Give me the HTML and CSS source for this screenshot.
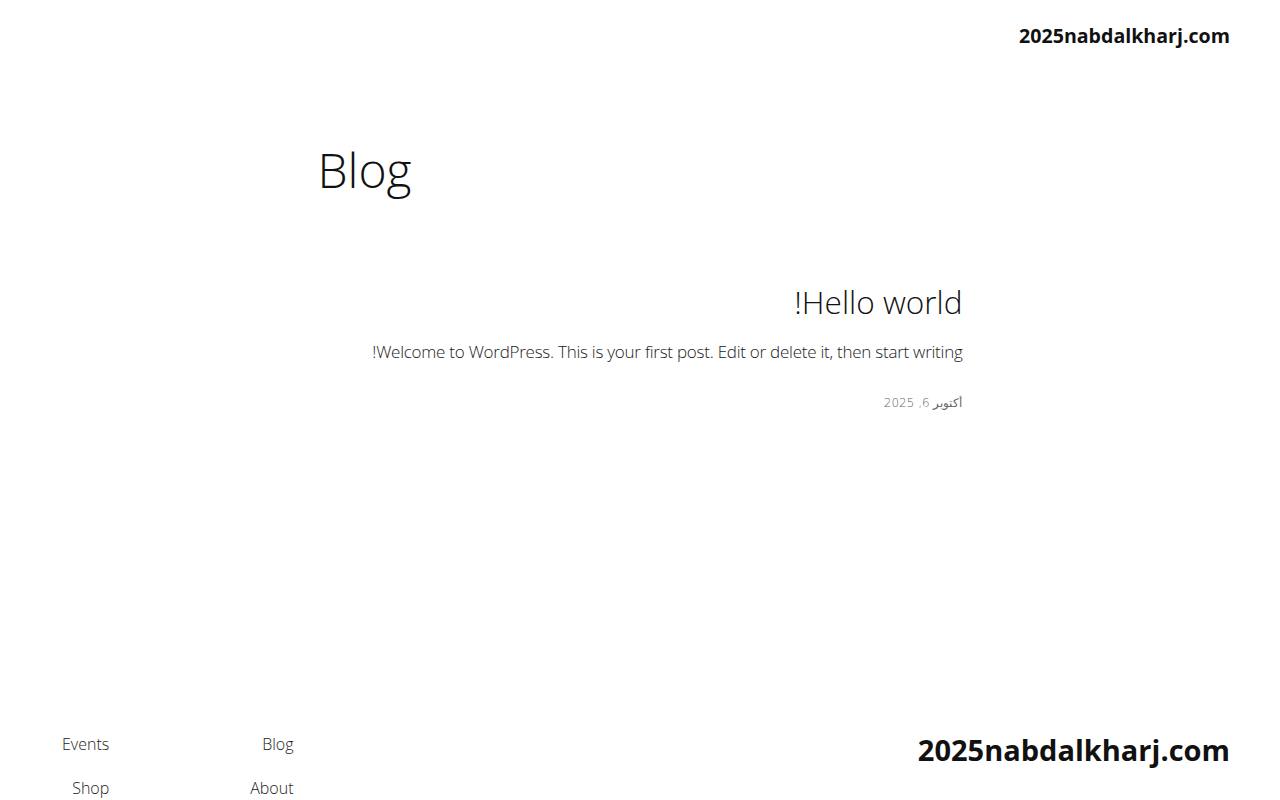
FILE: index.html
```html
<!DOCTYPE html>
<html lang="ar" dir="rtl">
<head>
<meta charset="utf-8">
<title>Blog</title>
<link rel="stylesheet" href="styles.css">
</head>
<body>
<header class="site-header">
  <p class="site-title">2025nabdalkharj.com</p>
</header>
<main class="site-main">
  <h1 class="page-title">Blog</h1>
  <article class="post">
    <h2 class="post-title">Hello world!</h2>
    <p class="post-excerpt">Welcome to WordPress. This is your first post. Edit or delete it, then start writing!</p>
    <p class="post-date">أكتوبر 6, 2025</p>
  </article>
</main>
<footer class="site-footer">
  <p class="footer-title">2025nabdalkharj.com</p>
  <nav class="footer-nav">
    <ul class="nav-col">
      <li>Blog</li>
      <li>About</li>
    </ul>
    <ul class="nav-col">
      <li>Events</li>
      <li>Shop</li>
    </ul>
  </nav>
</footer>
</body>
</html>
```

FILE: styles.css
```css
html, body {
  margin: 0;
  padding: 0;
  background: #fff;
}
body {
  font-family: "Open Sans", "Noto Sans", sans-serif;
  font-weight: 300;
  color: #111;
  direction: rtl;
}
p, h1, h2, ul { margin: 0; padding: 0; }

.site-header {
  display: flex;
  padding: 22px 50px 0 50px;
}
.site-title {
  font-weight: 700;
  font-size: 19.6px;
  line-height: 28px;
}

.site-main {
  width: 645px;
  margin: 0 auto;
  padding-top: 90px;
  min-height: 580px;
}
.page-title {
  font-weight: 300;
  font-size: 48px;
  line-height: 60px;
  text-align: left;
  direction: ltr;
}
.post {
  margin-top: 80px;
}
.post-title {
  font-weight: 300;
  font-size: 31.6px;
  line-height: 44px;
}
.post-excerpt {
  margin-top: 14px;
  font-size: 17px;
  letter-spacing: -0.25px;
  line-height: 28px;
  color: #1a1a1a;
}
.post-date {
  margin-top: 27px;
  font-family: "DejaVu Sans", "Open Sans", sans-serif;
  font-weight: 300;
  font-size: 12px;
  line-height: 20px;
  color: #666;
}

.site-footer {
  display: flex;
  justify-content: space-between;
  align-items: flex-start;
  padding: 0 50px 0 62px;
}
.footer-title {
  font-weight: 700;
  font-size: 29px;
  line-height: 40px;
  padding-top: 10px;
}
.footer-nav {
  display: flex;
  gap: 141px;
  padding-top: 10px;
}
.nav-col {
  list-style: none;
  display: flex;
  flex-direction: column;
  gap: 16px;
}
.nav-col li {
  font-size: 16px;
  line-height: 28px;
  color: #222;
}
```
